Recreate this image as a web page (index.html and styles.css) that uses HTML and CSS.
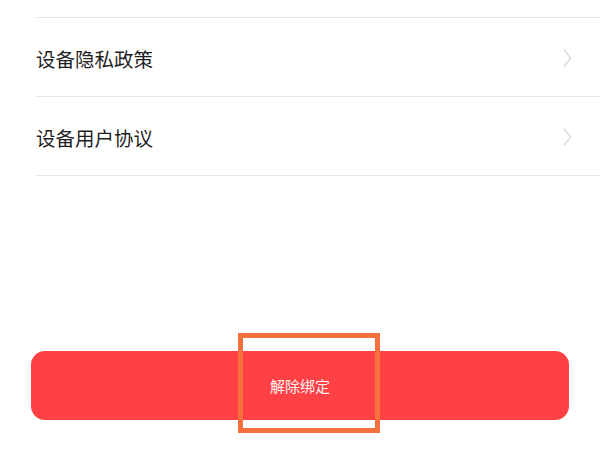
FILE: index.html
```html
<!DOCTYPE html>
<html lang="zh-CN">
<head>
<meta charset="utf-8">
<link rel="stylesheet" href="styles.css">
</head>
<body>
<div class="page">
  <ul class="list">
    <li class="row">
      <span class="label">设备隐私政策</span>
      <svg class="chev" width="10" height="20" viewBox="0 0 10 20"><path d="M2 1.5 L8.5 10 L2 18.5" fill="none" stroke="#d9d9d9" stroke-width="1.3"/></svg>
    </li>
    <li class="row">
      <span class="label">设备用户协议</span>
      <svg class="chev" width="10" height="20" viewBox="0 0 10 20"><path d="M2 1.5 L8.5 10 L2 18.5" fill="none" stroke="#d9d9d9" stroke-width="1.3"/></svg>
    </li>
  </ul>
  <div class="actions">
    <button class="unbind">解除绑定</button>
    <div class="highlight"></div>
  </div>
</div>
</body>
</html>
```
FILE: styles.css
```css
html, body {
  margin: 0;
  padding: 0;
  background: #ffffff;
  width: 600px;
  height: 450px;
  overflow: hidden;
  font-family: "Noto Sans CJK SC", "Noto Sans", sans-serif;
}
.page {
  display: flex;
  flex-direction: column;
}
.list {
  list-style: none;
  margin: 0;
  padding: 17px 0 0 36px;
}
.row {
  display: flex;
  align-items: center;
  justify-content: space-between;
  height: 78px;
  border-top: 1px solid #e9e9e9;
  padding-right: 28px;
}
.row:last-child {
  border-bottom: 1px solid #e9e9e9;
}
.label {
  font-size: 19.5px;
  color: #1f1f1f;
  margin-top: 2px;
}
.chev {
  display: block;
  margin-top: 2px;
}
.actions {
  position: relative;
  padding: 175px 31px 0 31px;
}
.unbind {
  display: block;
  width: 100%;
  height: 69px;
  border: none;
  border-radius: 14px;
  background: #ff4044;
  color: #fff5f5;
  font-family: "Noto Sans CJK SC", "Noto Sans", sans-serif;
  font-size: 15px;
  padding: 0;
}
.highlight {
  position: absolute;
  left: 238px;
  top: 157px;
  width: 132px;
  height: 90px;
  border: 5px solid #f5703c;
}
```
